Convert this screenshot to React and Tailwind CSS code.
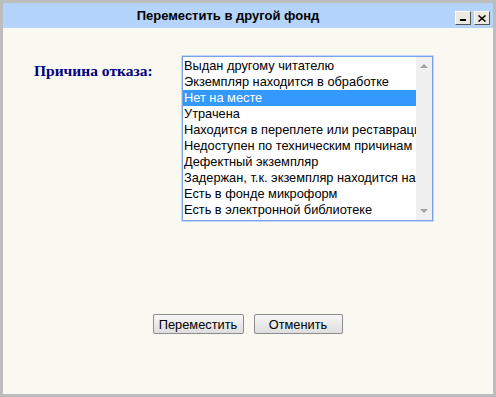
import React from "react";

const reasons = [
  "Выдан другому читателю",
  "Экземпляр находится в обработке",
  "Нет на месте",
  "Утрачена",
  "Находится в переплете или реставрации",
  "Недоступен по техническим причинам",
  "Дефектный экземпляр",
  "Задержан, т.к. экземпляр находится на выставке",
  "Есть в фонде микроформ",
  "Есть в электронной библиотеке",
];

const App = () => {
  const selected = 2;

  return (
    <div className="w-[496px] h-[397px] bg-[#bdbdbd] p-[3px] font-['Liberation_Sans',sans-serif]">
      <div className="w-full h-full flex flex-col bg-[#f9f9f1]">
        {/* Title bar */}
        <div className="h-[25px] bg-[#b4d4fc] flex items-center relative">
          <div className="flex-1 text-center text-[13px] font-bold text-black pr-[40px] pt-[1px]">
            Переместить в другой фонд
          </div>
          <div className="absolute right-[3px] top-[8px] flex gap-[3px]">
            <button className="w-[16px] h-[14px] bg-[#ece9e1] border border-t-white border-l-white border-r-[#555] border-b-[#555] flex items-end justify-center pb-[3px]">
              <span className="block w-[6px] h-[2px] bg-black" />
            </button>
            <button className="w-[16px] h-[14px] bg-[#ece9e1] border border-t-white border-l-white border-r-[#555] border-b-[#555] flex items-center justify-center">
              <svg width="8" height="7" viewBox="0 0 8 7">
                <path d="M0.5 0.5 L7.5 6.5 M7.5 0.5 L0.5 6.5" stroke="black" strokeWidth="1.5" />
              </svg>
            </button>
          </div>
        </div>

        {/* Body */}
        <div className="flex-1 flex flex-col">
          <div className="flex pt-[28px]">
            <div className="w-[179px] pl-[31px] pt-[3px] font-['Liberation_Serif',serif] font-bold text-[15.5px] text-[#000080]">
              Причина отказа:
            </div>
            <div className="w-[251px] h-[165px] border border-[#7aa0e8] shadow-[0_0_0_1px_#c3d7f7] bg-white flex">
              <div className="flex-1 overflow-hidden pt-[1px]">
                {reasons.map((r, i) => (
                  <div
                    key={r}
                    className={
                      "h-[16px] leading-[16px] pl-[1px] text-[12.8px] whitespace-nowrap overflow-hidden " +
                      (i === selected ? "bg-[#3399ff] text-white" : "text-black")
                    }
                  >
                    {r}
                  </div>
                ))}
              </div>
              <div className="w-[16px] bg-[#f0f0f0] flex flex-col justify-between items-center py-[7px]">
                <svg width="8" height="4" viewBox="0 0 8 4">
                  <path d="M0 4 L4 0 L8 4 Z" fill="#a3a3a3" />
                </svg>
                <svg width="8" height="4" viewBox="0 0 8 4">
                  <path d="M0 0 L4 4 L8 0 Z" fill="#a3a3a3" />
                </svg>
              </div>
            </div>
          </div>

          <div className="flex justify-center gap-[10px] mt-[93px] pr-[1px]">
            <button className="w-[91px] h-[20px] text-[12.8px] text-black border border-[#8c8c8c] rounded-[2px] bg-gradient-to-b from-[#f7f7f7] to-[#dedede]">
              Переместить
            </button>
            <button className="w-[89px] h-[20px] text-[12.8px] text-black border border-[#8c8c8c] rounded-[2px] bg-gradient-to-b from-[#f7f7f7] to-[#dedede]">
              Отменить
            </button>
          </div>
        </div>
      </div>
    </div>
  );
};

export default App;
